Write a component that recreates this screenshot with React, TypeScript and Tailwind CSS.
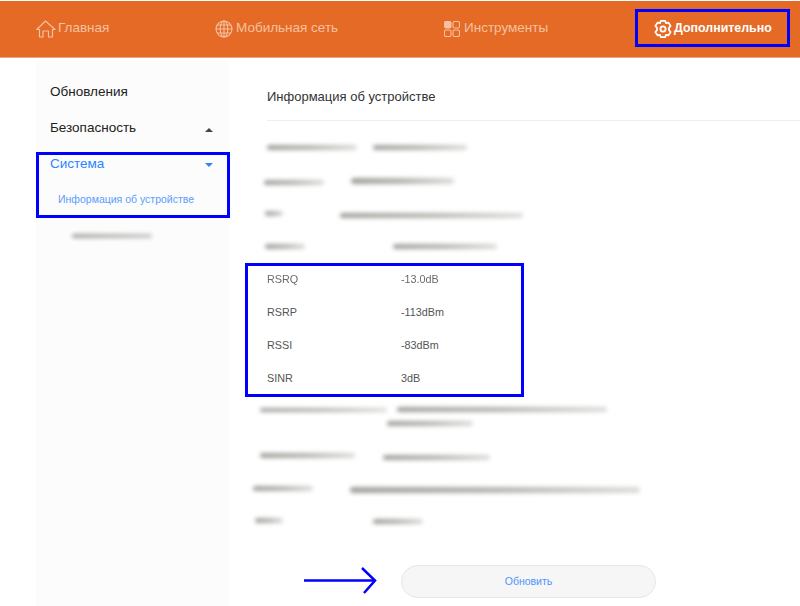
import React from "react";

function HomeIcon() {
  return (
    <svg width="20" height="18" viewBox="0 0 20 18" fill="none" stroke="currentColor" strokeWidth="1.2" strokeLinejoin="round" strokeLinecap="round">
      <path d="M0.8 9.5 L9.5 1 L19 9.5 L16.5 9.5 L16.5 17 L12.5 17 L12.5 11 L7 11 L7 17 L3.5 17 L3.5 9.5 Z" />
    </svg>
  );
}

function GlobeIcon() {
  return (
    <svg width="18" height="18" viewBox="0 0 18 18" fill="none" stroke="currentColor" strokeWidth="1.1">
      <circle cx="9" cy="9" r="8" />
      <ellipse cx="9" cy="9" rx="3.8" ry="8" />
      <path d="M9 1V17M1 9H17M2 5H16M2 13H16" />
    </svg>
  );
}

function ToolsIcon() {
  return (
    <svg width="16" height="16" viewBox="0 0 16 16" fill="none" stroke="currentColor" strokeWidth="1.1">
      <rect x="0.5" y="0.5" width="6.5" height="6.5" rx="1.5" fill="currentColor" />
      <rect x="9" y="0.5" width="6.5" height="6.5" rx="1.5" />
      <rect x="0.5" y="9" width="6.5" height="6.5" rx="1.5" />
      <rect x="9" y="9" width="6.5" height="6.5" rx="1.5" />
    </svg>
  );
}

function GearIcon() {
  return (
    <svg width="20" height="20" viewBox="0 0 20 20" fill="none" stroke="currentColor" strokeWidth="1.8" strokeLinejoin="round">
      <path d="M7.8 1.8H12.2L13 4.2L15.5 3.6L17.6 7L16 8.8V11.2L17.6 13L15.5 16.4L13 15.8L12.2 18.2H7.8L7 15.8L4.5 16.4L2.4 13L4 11.2V8.8L2.4 7L4.5 3.6L7 4.2Z" />
      <circle cx="10" cy="10" r="2.6" />
    </svg>
  );
}

function Row({ label, value, soft }: { label: string; value: string; soft?: boolean }) {
  return (
    <div className={soft ? "flex h-[33px] items-center text-[10.8px] text-[#6a6a6a] blur-[0.5px]" : "flex h-[33px] items-center text-[10.8px] text-[#555555]"}>
      <span className="w-[134px]">{label}</span>
      <span>{value}</span>
    </div>
  );
}

function Smudges({ children }: { children: React.ReactNode }) {
  return <div className="flex h-[33px] items-center">{children}</div>;
}

const dark = "rounded-full bg-linear-to-r from-[#a0a09c] via-[#b4b4b0] to-[#dcdcda] blur-[2px]";

export default function App() {
  return (
    <div className="relative h-[606px] w-[800px] overflow-hidden bg-white font-['Liberation_Sans',Arial,sans-serif]">
      <header className="mt-px flex h-[57px] items-center border-b border-[#f0a67c] bg-[#e46a26] pb-px pl-[36px] text-[13.5px]">
        <div className="flex w-[179px] items-center gap-[2px] text-[#f6c19f]">
          <HomeIcon />
          <span>Главная</span>
        </div>
        <div className="flex w-[229px] items-center gap-[3px] text-[#f6c19f]">
          <GlobeIcon />
          <span>Мобильная сеть</span>
        </div>
        <div className="flex w-[209px] items-center gap-1 text-[#f6c19f]">
          <ToolsIcon />
          <span>Инструменты</span>
        </div>
        <div className="flex items-center gap-px font-bold text-white">
          <GearIcon />
          <span className="text-[12.4px]">Дополнительно</span>
        </div>
      </header>

      <div className="flex h-[548px]">
        <aside className="mt-[2px] ml-[36px] w-[193px] bg-[#fcfcfc] pt-[22px] pl-[14px] text-[13.5px]">
          <div className="flex h-[20px] items-center text-[#222222]">Обновления</div>
          <div className="mt-[16px] flex h-[20px] items-center justify-between pr-[16px] text-[#222222]">
            <span>Безопасность</span>
            <span className="mt-[4px] h-0 w-0 border-x-[4px] border-b-[4px] border-x-transparent border-b-[#444444]" />
          </div>
          <div className="mt-[16px] flex h-[20px] items-center justify-between pr-[16px] text-[#2a85ff]">
            <span>Система</span>
            <span className="mt-[2px] h-0 w-0 border-x-[4px] border-t-[4px] border-x-transparent border-t-[#2a85ff]" />
          </div>
          <div className="mt-[18px] ml-[8px] text-[10.5px] text-[#5b9dff]">Информация об устройстве</div>
          <div className="mt-[26px] ml-[22px] h-[4px] w-[80px] rounded-full bg-linear-to-r from-[#a0a09c] to-[#c4c4c2] blur-[2px]" />
        </aside>

        <main className="ml-[38px] w-[533px]">
          <h1 className="flex h-[63px] items-center border-b border-[#eeeeee] pt-[16px] text-[13px] text-[#333333]">Информация об устройстве</h1>
          <div className="mt-[10px]">
            <Smudges>
              <div className={`h-[5px] w-[90px] ${dark}`} />
              <div className={`ml-[16px] h-[5px] w-[94px] ${dark}`} />
            </Smudges>
            <Smudges>
              <div className={`-ml-[3px] mt-[3px] h-[5px] w-[60px] ${dark}`} />
              <div className={`ml-[27px] h-[6px] w-[103px] ${dark}`} />
            </Smudges>
            <Smudges>
              <div className={`-ml-[2px] h-[5px] w-[18px] ${dark}`} />
              <div className={`ml-[57px] mt-[4px] h-[5px] w-[183px] ${dark}`} />
            </Smudges>
            <Smudges>
              <div className={`-ml-[2px] h-[5px] w-[40px] ${dark}`} />
              <div className={`ml-[88px] h-[5px] w-[104px] ${dark}`} />
            </Smudges>
            <div>
              <Row label="RSRQ" value="-13.0dB" soft />
              <Row label="RSRP" value="-113dBm" />
              <Row label="RSSI" value="-83dBm" />
              <Row label="SINR" value="3dB" />
            </div>
            <div className="h-[33px] pt-[12px]">
              <div className="flex items-center">
                <div className={`-ml-[7px] h-[4px] w-[127px] ${dark}`} />
                <div className={`ml-[10px] h-[5px] w-[210px] ${dark}`} />
              </div>
              <div className={`mt-[9px] ml-[120px] h-[5px] w-[86px] ${dark}`} />
            </div>
            <div className="mt-[11px] flex h-[33px] items-center">
              <div className={`-ml-[7px] h-[5px] w-[95px] ${dark}`} />
              <div className={`mt-[4px] ml-[28px] h-[5px] w-[107px] ${dark}`} />
            </div>
            <div className="flex h-[33px] items-center">
              <div className={`-ml-[14px] h-[5px] w-[60px] ${dark}`} />
              <div className={`mt-[2px] ml-[37px] h-[6px] w-[290px] ${dark}`} />
            </div>
            <div className="flex h-[31px] items-center">
              <div className={`-ml-[12px] h-[5px] w-[28px] ${dark}`} />
              <div className={`mt-[2px] ml-[90px] h-[5px] w-[50px] ${dark}`} />
            </div>
          </div>
          <button className="mt-[29px] ml-[134px] flex h-[33px] w-[255px] items-center justify-center rounded-full border border-[#e6e6e6] bg-[#f6f6f6] text-[10.5px] text-[#4d94ff]">
            Обновить
          </button>
        </main>
      </div>

      <div className="absolute top-[9px] left-[635px] h-[38px] w-[155px] border-[3px] border-[#0000ff]" />
      <div className="absolute top-[152px] left-[36px] h-[66px] w-[194px] border-[3px] border-[#0000ff]" />
      <div className="absolute top-[263px] left-[245px] h-[134px] w-[279px] border-[3px] border-[#0000ff]" />
      <svg className="absolute top-[566px] left-[303px]" width="76" height="30" viewBox="0 0 76 30" fill="none" stroke="#0000ff" strokeWidth="2.5">
        <path d="M1 14.5H72" />
        <path d="M59 2L72 14.5L61 27" />
      </svg>
    </div>
  );
}
